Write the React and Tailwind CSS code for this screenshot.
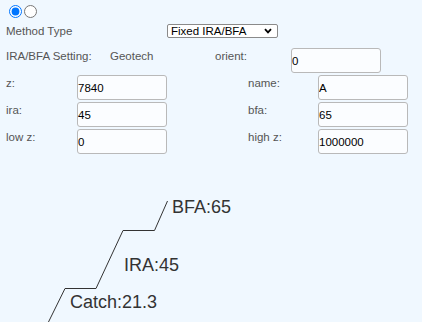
import React from 'react';

const Field = ({ value }) => (
  <input
    readOnly
    defaultValue={value}
    className="w-[90px] h-[25px] rounded-[3px] border border-[#b9b9b9] bg-[#fbfdff] px-0 text-[11.5px] text-black outline-none"
  />
);

const Label = ({ children, w }) => (
  <div className={`${w} pt-[1px] leading-[14px]`}>{children}</div>
);

const App = () => {
  const rows = [
    ['z:', '7840', 'name:', 'A'],
    ['ira:', '45', 'bfa:', '65'],
    ['low z:', '0', 'high z:', '1000000'],
  ];

  return (
    <div className="w-[422px] h-[322px] overflow-hidden bg-[#f0f8ff] font-['Liberation_Sans',Arial,sans-serif] text-[11.5px] text-[#555]">
      {/* radios */}
      <div className="flex h-[24px] items-start gap-[2px] pl-[9px] pt-[5px]">
        <input type="radio" name="mode" defaultChecked className="m-0 w-[13px] h-[13px]" />
        <input type="radio" name="mode" className="m-0 w-[13px] h-[13px]" />
      </div>

      {/* method type */}
      <div className="flex h-[14px] items-center pl-[6px]">
        <div className="w-[161px] leading-[14px]">Method Type</div>
        <div className="flex w-[111px] h-[14px] items-center justify-between rounded-[2px] border border-[#8a8a8a] bg-white pl-[3px] pr-[5px] text-black leading-[12px]">
          <span>Fixed IRA/BFA</span>
          <svg width="8" height="6" viewBox="0 0 8 6" fill="none">
            <path d="M1 1.2 L4 4.4 L7 1.2" stroke="#000" strokeWidth="1.8" />
          </svg>
        </div>
      </div>

      {/* setting row */}
      <div className="mt-[10px] flex h-[25px] items-start pl-[6px]">
        <Label w="w-[104px]">IRA/BFA Setting:</Label>
        <Label w="w-[105px]">Geotech</Label>
        <Label w="w-[76px]">orient:</Label>
        <Field value="0" />
      </div>

      {/* field grid */}
      <div className="flex flex-col gap-[2px] pl-[6px] pt-[2px]">
        {rows.map(([l1, v1, l2, v2]) => (
          <div key={l1} className="flex h-[25px] items-start">
            <Label w="w-[71px]">{l1}</Label>
            <Field value={v1} />
            <Label w="w-[70px] ml-[81px]">{l2}</Label>
            <Field value={v2} />
          </div>
        ))}
      </div>

      {/* profile drawing */}
      <svg
        className="mt-[6px] block"
        width="422"
        height="162"
        viewBox="0 160 422 162"
        fontFamily="Liberation Sans, Arial, sans-serif"
        fontSize="18"
        fill="#333"
      >
        <polyline
          points="47.5,324 65,288.5 96,288.5 123,230.5 154.5,230.5 167.5,201"
          fill="none"
          stroke="#333"
          strokeWidth="1"
        />
        <text x="172" y="213">BFA:65</text>
        <text x="124" y="271">IRA:45</text>
        <text x="70" y="307.5">Catch:21.3</text>
      </svg>
    </div>
  );
};

export default App;
